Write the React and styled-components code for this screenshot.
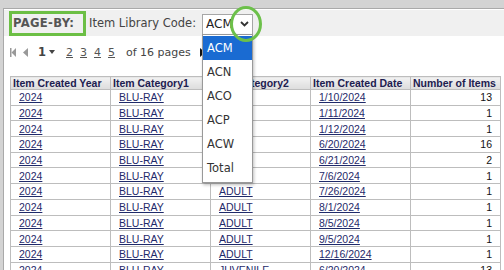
import React from "react";
import styled, { createGlobalStyle } from "styled-components";

const GlobalStyle = createGlobalStyle`
  html, body {
    margin: 0;
    padding: 0;
    background: #d3d3d3;
    overflow: hidden;
  }
`;

const Page = styled.div`
  padding: 8px 0 0 3px;
  height: 270px;
  box-sizing: border-box;
`;

const Panel = styled.div`
  background: #fff;
  border-top: 1px solid #a9a9a9;
  border-left: 1px solid #a9a9a9;
  padding-top: 1px;
  height: 100%;
`;

const Toolbar = styled.div`
  display: flex;
  align-items: center;
  height: 26px;
  background: #f0f0f0;
  padding-left: 5px;
  font-family: "DejaVu Sans", sans-serif;
  color: #444;
`;

const PageBy = styled.div`
  box-sizing: border-box;
  height: 25px;
  width: 77px;
  border: 3px solid #6cbf45;
  display: flex;
  align-items: center;
  padding-left: 1px;
  font-weight: bold;
  font-size: 11.6px;
  letter-spacing: 0.3px;
  color: #555;
`;

const Label = styled.span`
  font-size: 11.5px;
  margin-left: 3px;
`;

const SelectWrap = styled.div`
  position: relative;
  margin-left: 6px;
  margin-top: 2px;
`;

const SelectBox = styled.div`
  box-sizing: border-box;
  width: 51px;
  height: 21px;
  background: #fff;
  border: 1px solid #a6a6a6;
  display: flex;
  align-items: center;
  padding-left: 3px;
  overflow: hidden;
  font-size: 12px;
  color: #222;
`;

const SelectText = styled.span`
  width: 30px;
  overflow: hidden;
  white-space: nowrap;
`;

const Chevron = styled.svg`
  margin-left: 4px;
`;

const Ring = styled.div`
  position: absolute;
  left: 28px;
  top: -8px;
  width: 26px;
  height: 30px;
  border: 3.5px solid #6cc04a;
  border-radius: 50%;
  pointer-events: none;
  z-index: 3;
`;

const Options = styled.ul`
  position: absolute;
  top: 20px;
  left: 0;
  width: 51px;
  box-sizing: border-box;
  margin: 0;
  padding: 1px 0 2px;
  list-style: none;
  background: #fff;
  border: 1px solid #999;
  box-shadow: 1px 2px 3px rgba(0, 0, 0, 0.25);
  z-index: 2;
`;

const Option = styled.li`
  height: 24px;
  line-height: 24px;
  padding-left: 4px;
  font-size: 11.5px;
  color: ${({ selected }) => (selected ? "#fff" : "#333")};
  background: ${({ selected }) => (selected ? "#1a6bd2" : "transparent")};
`;

const Pager = styled.div`
  display: flex;
  align-items: center;
  height: 16px;
  margin: 8px 0 16px 6px;
  font-family: "DejaVu Sans", sans-serif;
  font-size: 11px;
  color: #444;
`;

const Icon = styled.svg`
  margin-right: ${({ gap }) => gap || 0}px;
`;

const Current = styled.span`
  font-weight: bold;
  font-size: 11.5px;
  margin-left: 1px;
`;

const PageLink = styled.span`
  text-decoration: underline;
  margin-right: ${({ gap }) => gap}px;
  color: #555;
`;

const Table = styled.table`
  border-collapse: collapse;
  margin-left: 6px;
  table-layout: fixed;
  width: 490px;
  font-family: "Liberation Sans", Arial, sans-serif;
  font-size: 10.5px;
`;

const Th = styled.th`
  height: 12px;
  padding: 0 0 0 2px;
  text-align: left;
  font-weight: bold;
  color: #1d2050;
  background: linear-gradient(#f2f2f2, #dcdcdc);
  border: 1px solid #bdbdbd;
  white-space: nowrap;
  overflow: hidden;
`;

const Td = styled.td`
  height: 14.7px;
  padding: 0 8px;
  text-align: ${({ num }) => (num ? "right" : "left")};
  border: 1px solid #bdbdbd;
  color: ${({ num }) => (num ? "#111" : "#1f2a6a")};
  text-decoration: ${({ num }) => (num ? "none" : "underline")};
  white-space: nowrap;
  line-height: 12px;
`;

const rows = [
  ["ADULT", "1/10/2024", 13],
  ["ADULT", "1/11/2024", 1],
  ["ADULT", "1/12/2024", 1],
  ["ADULT", "6/20/2024", 16],
  ["ADULT", "6/21/2024", 2],
  ["ADULT", "7/6/2024", 1],
  ["ADULT", "7/26/2024", 1],
  ["ADULT", "8/1/2024", 1],
  ["ADULT", "8/5/2024", 1],
  ["ADULT", "9/5/2024", 1],
  ["ADULT", "12/16/2024", 1],
  ["JUVENILE", "6/20/2024", 13],
];

const codes = ["ACM", "ACN", "ACO", "ACP", "ACW", "Total"];

export default function App() {
  return (
    <>
      <GlobalStyle />
      <Page>
        <Panel>
          <Toolbar>
            <PageBy>PAGE-BY:</PageBy>
            <Label>Item Library Code:</Label>
            <SelectWrap>
              <SelectBox>
                <SelectText>ACM</SelectText>
                <Chevron width="9" height="6" viewBox="0 0 9 6">
                  <polyline points="1,1 4.5,4.5 8,1" fill="none" stroke="#333" strokeWidth="1.8" />
                </Chevron>
              </SelectBox>
              <Ring />
              <Options>
                {codes.map((c, i) => (
                  <Option key={c} selected={i === 0}>{c}</Option>
                ))}
              </Options>
            </SelectWrap>
          </Toolbar>
          <Pager>
            <Icon width="6" height="9" viewBox="0 0 6 9" gap={7}>
              <rect x="0" y="0" width="1.5" height="9" fill="#999" />
              <polygon points="6,0 6,9 1.5,4.5" fill="#999" />
            </Icon>
            <Icon width="5" height="9" viewBox="0 0 5 9" gap={9}>
              <polygon points="5,0 5,9 0,4.5" fill="#999" />
            </Icon>
            <Current>1</Current>
            <Icon width="6" height="4" viewBox="0 0 6 4" gap={11} style={{ marginLeft: 3 }}>
              <polygon points="0,0 6,0 3,4" fill="#444" />
            </Icon>
            <PageLink gap={7}>2</PageLink>
            <PageLink gap={7}>3</PageLink>
            <PageLink gap={7}>4</PageLink>
            <PageLink gap={11}>5</PageLink>
            <span>of 16 pages</span>
            <Icon width="5" height="9" viewBox="0 0 5 9" style={{ marginLeft: 9 }}>
              <polygon points="0,0 0,9 5,4.5" fill="#111" />
            </Icon>
          </Pager>
          <Table>
            <colgroup>
              <col style={{ width: 100 }} />
              <col style={{ width: 100 }} />
              <col style={{ width: 100 }} />
              <col style={{ width: 100 }} />
              <col style={{ width: 90 }} />
            </colgroup>
            <thead>
              <tr>
                <Th>Item Created Year</Th>
                <Th>Item Category1</Th>
                <Th>Item Category2</Th>
                <Th>Item Created Date</Th>
                <Th>Number of Items</Th>
              </tr>
            </thead>
            <tbody>
              {rows.map(([cat2, date, n], i) => (
                <tr key={i}>
                  <Td>2024</Td>
                  <Td>BLU-RAY</Td>
                  <Td>{cat2}</Td>
                  <Td>{date}</Td>
                  <Td num>{n}</Td>
                </tr>
              ))}
            </tbody>
          </Table>
        </Panel>
      </Page>
    </>
  );
}
